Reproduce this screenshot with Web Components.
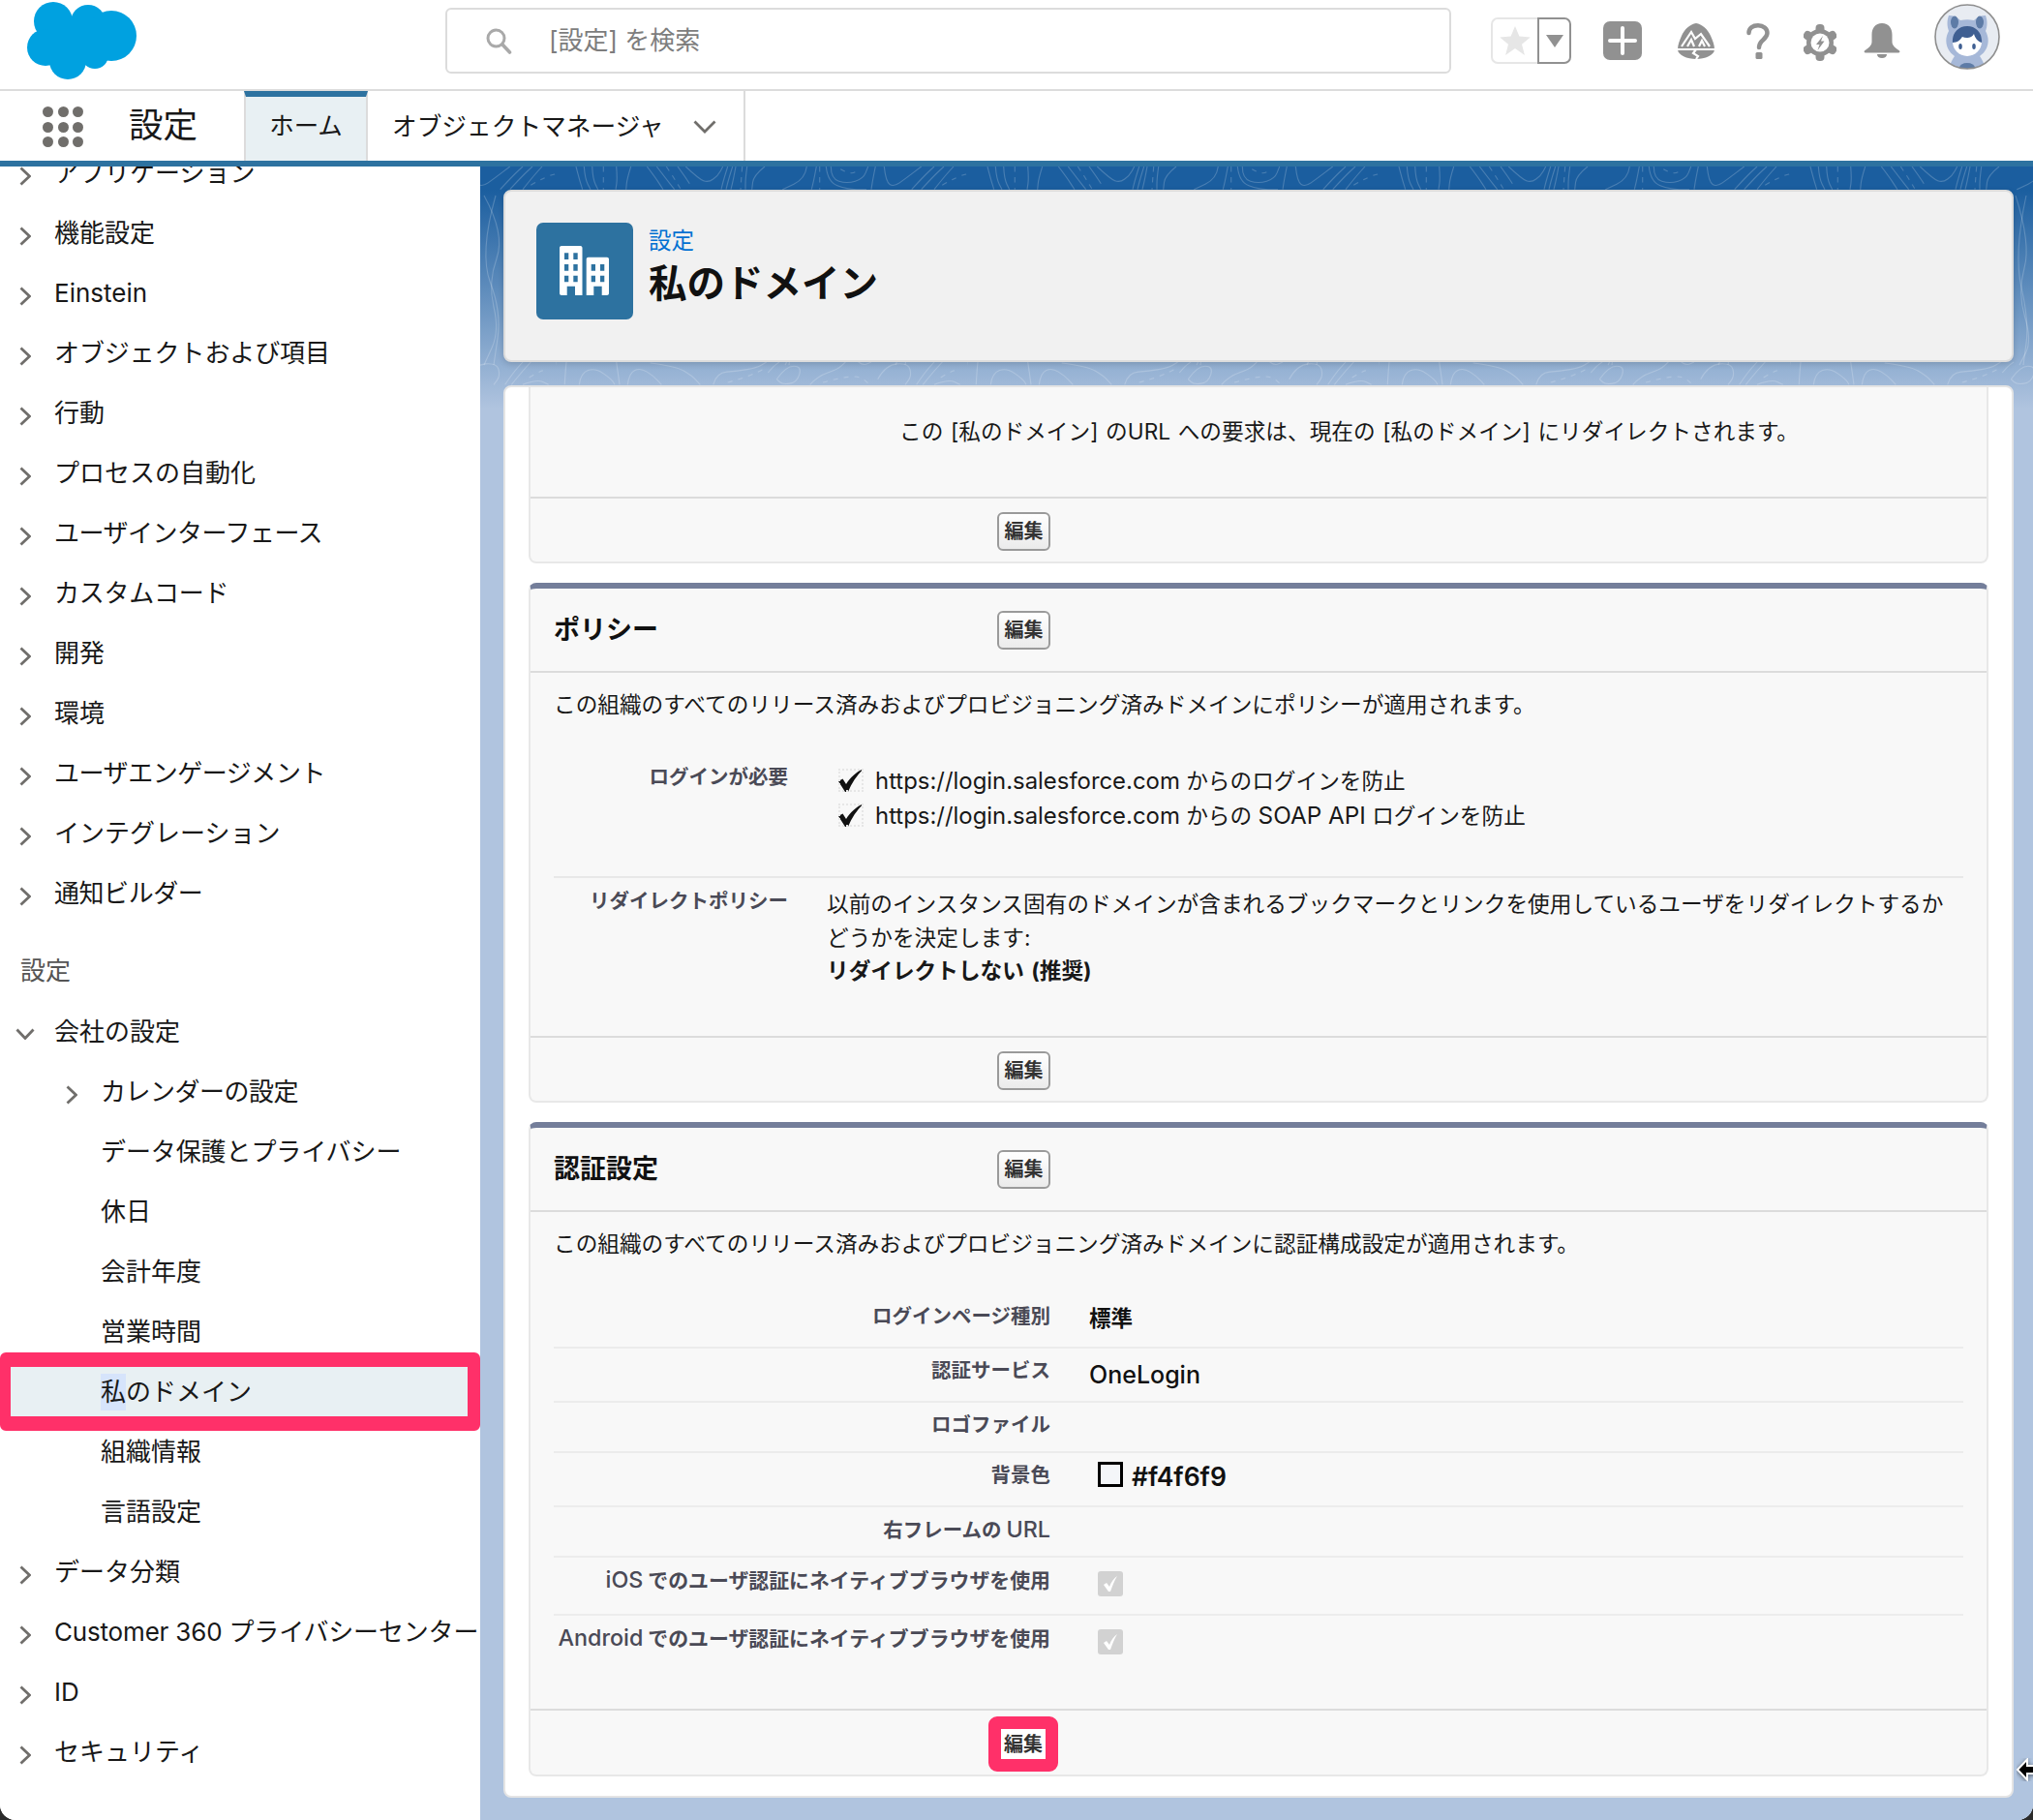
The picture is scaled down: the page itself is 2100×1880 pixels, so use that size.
<!DOCTYPE html>
<html lang="ja">
<head>
<meta charset="utf-8">
<title>私のドメイン</title>
<style>
html,body{margin:0;padding:0;width:2100px;height:1880px;background:#2b2b2b;overflow:hidden}
body{font-family:Inter,"Noto Sans CJK JP",sans-serif;color:#181818}
sf-side-item mark{display:inline-block;background:#d6e4fb;color:inherit;line-height:38px;width:26px}
</style>
</head>
<body>
<sf-app>
  <sf-header slot="header"></sf-header>
  <sf-nav slot="nav"></sf-nav>
  <sf-sidebar slot="side">
    <sf-side-item chev>アプリケーション</sf-side-item>
    <sf-side-item chev>機能設定</sf-side-item>
    <sf-side-item chev>Einstein</sf-side-item>
    <sf-side-item chev style="letter-spacing:-.1px">オブジェクトおよび項目</sf-side-item>
    <sf-side-item chev>行動</sf-side-item>
    <sf-side-item chev>プロセスの自動化</sf-side-item>
    <sf-side-item chev style="letter-spacing:-.5px">ユーザインターフェース</sf-side-item>
    <sf-side-item chev style="letter-spacing:-.25px">カスタムコード</sf-side-item>
    <sf-side-item chev>開発</sf-side-item>
    <sf-side-item chev>環境</sf-side-item>
    <sf-side-item chev style="letter-spacing:-.45px">ユーザエンゲージメント</sf-side-item>
    <sf-side-item chev>インテグレーション</sf-side-item>
    <sf-side-item chev style="letter-spacing:-.45px">通知ビルダー</sf-side-item>
    <sf-side-heading>設定</sf-side-heading>
    <sf-side-item chev="open">会社の設定</sf-side-item>
    <sf-side-item chev nested style="letter-spacing:-.5px">カレンダーの設定</sf-side-item>
    <sf-side-item nested style="letter-spacing:-.1px">データ保護とプライバシー</sf-side-item>
    <sf-side-item nested>休日</sf-side-item>
    <sf-side-item nested>会計年度</sf-side-item>
    <sf-side-item nested>営業時間</sf-side-item>
    <sf-side-item nested highlight><mark>私</mark>のドメイン</sf-side-item>
    <sf-side-item nested>組織情報</sf-side-item>
    <sf-side-item nested>言語設定</sf-side-item>
    <sf-side-item chev>データ分類</sf-side-item>
    <sf-side-item chev style="letter-spacing:-.18px">Customer 360 プライバシーセンター</sf-side-item>
    <sf-side-item chev>ID</sf-side-item>
    <sf-side-item chev>セキュリティ</sf-side-item>
  </sf-sidebar>
  <sf-main slot="main">
    <sf-page-head></sf-page-head>
    <sf-card>
      <sf-panel first>
        <sf-top-note>この [私のドメイン] のURL への要求は、現在の [私のドメイン] にリダイレクトされます。</sf-top-note>
      </sf-panel>
      <sf-panel heading="ポリシー">
        <sf-desc>この組織のすべてのリリース済みおよびプロビジョニング済みドメインにポリシーが適用されます。</sf-desc>
        <sf-policy></sf-policy>
      </sf-panel>
      <sf-panel heading="認証設定" highlight>
        <sf-desc>この組織のすべてのリリース済みおよびプロビジョニング済みドメインに認証構成設定が適用されます。</sf-desc>
        <sf-auth></sf-auth>
      </sf-panel>
    </sf-card>
  </sf-main>
  <sf-cursor slot="over"></sf-cursor>
</sf-app>

<script>
function def(name, html){
  class C extends HTMLElement{
    constructor(){super();this.attachShadow({mode:'open'}).innerHTML=typeof html==='function'?html(this):html;}
  }
  customElements.define(name,C);
}
const CHEV='<svg width="12" height="20" viewBox="0 0 12 20"><path d="M1.5 1.5 10.5 10 1.5 18.5" fill="none" stroke="#706e6b" stroke-width="2.8"/></svg>';

/* contour background: points are read from the reference and smoothed */
function contour(){
  const smooth=(pts)=>{
    let d='M'+pts[0].join(' ');
    for(let i=1;i<pts.length-1;i++){
      const mx=(pts[i][0]+pts[i+1][0])/2,my=(pts[i][1]+pts[i+1][1])/2;
      d+=` Q${pts[i][0]} ${pts[i][1]} ${mx} ${my}`;
    }
    d+=' L'+pts[pts.length-1].join(' ');
    return d;
  };
  const band=(top,y0)=>(s)=>s.trim().split(/\s+/).map(p=>{const[a,b]=p.split(',').map(Number);return [+(a/3).toFixed(1),+((b-y0)/3+top).toFixed(1)]});
  const A=band(0,22),B=band(202,27);
  const a=['60,22 70,60 80,93','85,22 88,60 105,93','110,22 112,60 128,93','185,22 188,60 183,93','230,22 218,60 215,93',
    '280,22 305,55 330,93','310,22 335,55 365,93','375,22 395,50 412,75','400,22 440,60 470,72 500,50 515,22',
    '530,22 518,60 510,93','545,22 533,60 525,93','555,22 548,60 540,93','590,22 585,60 585,93','645,22 610,50 605,93',
    '775,22 770,60 700,93','805,22 798,60 790,93','850,22 850,60 900,75 950,60 965,22','835,22 840,70 900,93 960,93','988,22 980,60 975,93',
    '1015,22 1020,70 1045,85 1080,60 1130,22','1100,93 1135,55 1170,22','1130,93 1165,55 1200,22','1170,93 1200,55 1230,22'];
  const ad=['145,22 145,60 145,93','340,22 362,55 385,93','575,22 572,60 570,93','815,22 815,60 815,93','880,30 910,48 940,30','1195,80 1280,30 1310,70'];
  const b=['30,27 27,60 25,97','70,97 75,60 120,45 170,80 180,97','185,27 190,60 195,97','220,97 225,60 260,45 300,70 325,97','290,30 370,40 420,70 445,97',
    '485,97 495,60 560,55 620,45 650,27','682,80 710,40 760,40 745,90 700,97 682,80','655,60 672,40 690,27','785,97 810,70 870,50 895,27','935,27 950,38 975,27',
    '995,80 1020,35 1090,30 1100,70 1080,97','1115,97 1140,60 1170,27','1135,97 1165,60 1195,27','1170,97 1215,80 1250,97','1275,27 1280,60 1285,97'];
  const bd=['530,90 585,75 640,50','825,90 880,75 940,70 970,97','1190,75 1215,60 1240,50'];
  const side=[[[350,30],[372,70],[354,120],[366,170],[350,205]],[[362,30],[345,90],[368,150],[360,205]],
    [[232,30],[248,80],[234,130],[249,180],[236,205]],[[243,30],[230,90],[246,160],[240,205]]];
  const path=(d,dash)=>`<path d="${d}"${dash?' stroke-dasharray="5 6"':''}/>`;
  const body=[...a.map(s=>path(smooth(A(s)))),...ad.map(s=>path(smooth(A(s)),1)),
    ...b.map(s=>path(smooth(B(s)))),...bd.map(s=>path(smooth(B(s)),1)),...side.map(s=>path(smooth(s)))].join('');
  const svg=`<svg xmlns="http://www.w3.org/2000/svg" width="425" height="240" viewBox="0 0 425 240"><g fill="none" stroke="#fff" stroke-opacity=".2" stroke-width="1.1">${body}</g></svg>`;
  return 'url("data:image/svg+xml,'+encodeURIComponent(svg)+'")';
}

def('sf-app',`<style>
:host{display:grid;grid-template-columns:496px 1fr;grid-template-rows:94px 78px 1fr;width:2100px;height:1880px;position:relative;overflow:hidden;border-radius:0 0 16px 16px;background:#fff}
::slotted([slot=header]),::slotted([slot=nav]){grid-column:1/3}
</style><slot name="header"></slot><slot name="nav"></slot><slot name="side"></slot><slot name="main"></slot><slot name="over"></slot>`);

def('sf-header',`<style>
:host{display:flex;align-items:flex-start;height:94px;box-sizing:border-box;border-bottom:2px solid #dcdcdc;background:#fff}
.logo{margin:0 0 0 28px;width:116px;height:84px;flex:none}
.search{margin:8px 0 0 316px;width:1039px;height:68px;box-sizing:border-box;border:2px solid #dcdcdc;border-radius:6px;display:flex;align-items:center;padding-left:39px;flex:none}
.search span{margin-left:38px;font-size:26px;color:#7d7d7d;line-height:30px}
.fav{margin:18px 0 0 41px;display:flex;height:48px;flex:none}
.fav i{display:flex;align-items:center;justify-content:center;box-sizing:border-box;height:48px}
.fav .a{width:48px;border:2px solid #e6e6e6;border-right:0;border-radius:7px 0 0 7px}
.fav .b{width:35px;border:2px solid #919191;border-radius:0 7px 7px 0}
.ic{flex:none;display:block}
</style>
<svg class="logo" viewBox="0 0 116 84"><g fill="#00a1e0"><circle cx="27" cy="22" r="20"/><circle cx="63" cy="23" r="18"/><circle cx="87" cy="37" r="26"/><circle cx="19" cy="49" r="19"/><circle cx="42" cy="63" r="19"/><circle cx="70" cy="57" r="14"/><rect x="22" y="22" width="60" height="40"/></g></svg>
<div class="search"><svg width="28" height="28" viewBox="0 0 28 28"><circle cx="11.500" cy="11.500" r="8.500" fill="none" stroke="#a9a9a9" stroke-width="3"/><path d="M18 18l7.500 8" stroke="#a9a9a9" stroke-width="3.600" fill="none" stroke-linecap="round"/></svg><span>[設定] を検索</span></div>
<div class="fav"><i class="a"><svg width="32" height="32" viewBox="0 0 32 32"><path d="M16 1l4.400 10.600 11.400.8-8.800 7.300 2.900 11.200L16 24l-9.900 6.900 2.900-11.200L.2 12.400l11.400-.8z" fill="#e6e6e6"/></svg></i><i class="b"><svg width="18" height="13" viewBox="0 0 18 13"><path d="M0 0h18L9 13z" fill="#919191"/></svg></i></div>
<svg class="ic" style="margin:22px 0 0 33px" width="40" height="40" viewBox="0 0 40 40"><rect width="40" height="40" rx="7" fill="#919191"/><path d="M20 7v26M7 20h26" stroke="#fff" stroke-width="4" stroke-linecap="round"/></svg>
<svg class="ic" style="margin:24px 0 0 37px" width="38" height="38" viewBox="0 0 38 38"><path d="M19 0C25 1 31 6 34 13 36 18 38 22 38 27 38 33 28 37 19 37 10 37 0 33 0 27 0 22 2 18 4 13 7 6 13 1 19 0z" fill="#919191"/><path d="M4 24 14 9 18 16 24 11 33 24M10 24 14 17 17 24M22 24 25 18 28 24M0 27H38M19 27 16 31 21 34 19 37" fill="none" stroke="#fff" stroke-width="2.200"/></svg>
<svg class="ic" style="margin:24px 0 0 33px" width="24" height="37" viewBox="0 0 24 37"><path d="M2.500 10C2.500 5 6.500 2.300 12 2.300S21.500 5.500 21.500 10c0 7-8.500 7-8.500 15" fill="none" stroke="#919191" stroke-width="4.500" stroke-linecap="round"/><rect x="9.500" y="30" width="7" height="7" rx="1.500" fill="#919191"/></svg>
<svg class="ic" style="margin:25px 0 0 35px" width="34" height="38" viewBox="0 0 34 38"><g fill="#919191"><circle cx="17" cy="19" r="14"/><rect x="12.500" y="0" width="9" height="38" rx="4"/><rect x="12.500" y="0" width="9" height="38" rx="4" transform="rotate(60 17 19)"/><rect x="12.500" y="0" width="9" height="38" rx="4" transform="rotate(120 17 19)"/></g><circle cx="17" cy="19" r="9.500" fill="#fff"/><path d="M20 12 13 21h3.500l-2 6 7-9.500H18z" fill="#919191"/></svg>
<svg class="ic" style="margin:24px 0 0 28px" width="38" height="36" viewBox="0 0 38 36"><path d="M19 0c7 0 10.500 5 10.500 12v7c0 4 3 6 7 9 1.500 1 1 2.500-.5 2.500H2c-1.500 0-2-1.500-.5-2.500 4-3 7-5 7-9v-7C8.500 5 12 0 19 0z" fill="#919191"/><path d="M14 32h10c0 2.500-2 4-5 4s-5-1.500-5-4z" fill="#919191"/></svg>
<svg class="ic" style="margin:4px 0 0 35px" width="68" height="68" viewBox="0 0 68 68"><defs><clipPath id="av"><circle cx="34" cy="34" r="33"/></clipPath></defs><circle cx="34" cy="34" r="33" fill="#e8ecf2"/><g clip-path="url(#av)"><path d="M15 12c5 0 9 2 12 5 5-1 9-1 14 0 3-3 7-5 12-5 2 5 2 11 0 16 5 9 3 20-6 26 3 4 5 9 6 14H15c1-5 3-10 6-14-9-6-11-17-6-26-2-5-2-11 0-16z" fill="#a6b8d8"/><ellipse cx="21" cy="19" rx="4" ry="6.500" fill="#5d7ba6"/><ellipse cx="47" cy="19" rx="4" ry="6.500" fill="#5d7ba6"/><circle cx="34" cy="39" r="15" fill="#fff"/><path d="M19 40c-1-10 6-17 15-17s16 7 15 17c-4-1-7-5-8-9-2 4-8 5-12 3-2 3-5 6-10 6z" fill="#3f5f92"/><ellipse cx="27" cy="44" rx="1.800" ry="3" fill="#3f5f92"/><ellipse cx="41" cy="44" rx="1.800" ry="3" fill="#3f5f92"/><ellipse cx="34" cy="66" rx="8" ry="5" fill="#5d7ba6"/></g><circle cx="34" cy="34" r="33" fill="none" stroke="#8f8f8f" stroke-width="1.600"/></svg>`);

def('sf-nav',`<style>
:host{display:flex;height:78px;box-sizing:border-box;border-bottom:6px solid #2d72a0;background:#fff}
.w{margin:16px 0 0 44px;width:42px;height:42px;display:grid;grid-template-columns:repeat(3,11px);grid-auto-rows:11px;gap:4.500px 4.500px;flex:none}
.w i{background:#706e6b;border-radius:50%}
.t{margin:13px 0 0 47px;font-size:35.500px;line-height:46px;width:119px;flex:none}
.h{width:128px;box-sizing:border-box;border:solid #dcdcdc;border-width:0 2px;border-top:6px solid #2d72a0;background:#e8f0f3;font-size:25.500px;line-height:60px;text-align:center;flex:none}
.o{width:390px;box-sizing:border-box;border-right:2px solid #dcdcdc;display:flex;align-items:center;padding-left:25px;font-size:25.700px;flex:none}
.o span{margin-top:-4px}
.o svg{margin-left:30px;margin-top:2px}
</style>
<div class="w"><i></i><i></i><i></i><i></i><i></i><i></i><i></i><i></i><i></i></div>
<div class="t">設定</div><div class="h">ホーム</div>
<div class="o"><span>オブジェクトマネージャ</span><svg width="24" height="14" viewBox="0 0 24 14"><path d="M1.500 1.500 12 12 22.500 1.500" fill="none" stroke="#706e6b" stroke-width="2.800"/></svg></div>`);

def('sf-sidebar',`<style>
:host{display:block;overflow:hidden;background:#fff;height:1708px}
.in{margin-top:-25px}
</style><div class="in"><slot></slot></div>`);

def('sf-side-item',(el)=>{
  const c=el.getAttribute('chev'),nested=el.hasAttribute('nested'),hl=el.hasAttribute('highlight');
  const ic=c===null?'':(c==='open'
    ?'<svg class="ch" style="left:16px;top:28px" width="20" height="12" viewBox="0 0 20 12"><path d="M1.500 1.500 10 10.500 18.500 1.500" fill="none" stroke="#706e6b" stroke-width="2.800"/></svg>'
    :CHEV.replace('<svg','<svg class="ch" style="left:'+(nested?68:20)+'px;top:25px"'));
  return `<style>
  :host{display:block;height:62px;line-height:64px;font-size:26px;position:relative;white-space:nowrap;padding-left:${nested?104:56}px;color:#181818}
  .ch{position:absolute}
  ${hl?`:host{background:#e8f0f3}
  :host::after{content:"";position:absolute;left:0;right:0;top:-9px;bottom:-10px;border:solid #ff3069;border-width:15px 13px 15px 11px;border-radius:6px;box-sizing:border-box;pointer-events:none}`:''}
  </style>${ic}<slot></slot>`;
});

def('sf-side-heading',`<style>:host{display:block;height:81px;padding:19px 0 0 21px;box-sizing:border-box;font-size:26px;line-height:62px;color:#555}</style><slot></slot>`);

def('sf-main',`<style>
:host{display:block;padding:24px 20px 0 24px;height:1708px;box-sizing:border-box;background-color:#b0c4df;
background-image:${contour()},linear-gradient(#1b5e9f 0,#1b5e9f 24px,#b0c4df 250px);
background-repeat:repeat-x,no-repeat;background-position:79px 0,0 0}
</style><slot></slot>`);

def('sf-page-head',`<style>
:host{display:flex;height:178px;box-sizing:border-box;background:#f1f1f1;border:2px solid #dcdcdc;border-radius:8px;padding:32px 0 0 32px;align-items:flex-start;box-shadow:0 2px 6px rgba(0,0,0,.15)}
.i{width:100px;height:100px;border-radius:7px;background:#2d72a0;display:flex;align-items:center;justify-content:center;flex:none}
.tx{margin-left:16px}
.c{font-size:23.500px;line-height:30px;color:#0070d2;margin-top:4px}
.h{font-size:39.500px;line-height:56px;font-weight:700;color:#111;margin-top:1px}
</style>
<div class="i"><svg width="52" height="52" viewBox="0 0 52 52"><path fill="#fff" fill-rule="evenodd" d="M2 0h19.500c1.100 0 2 .9 2 2v49h-7.500v-9.300H7.700V51H2c-1.100 0-2-.9-2-2V2C0 .9.900 0 2 0zM5 7.300V14h4.300V7.300zM14.300 7.300V14h4.400V7.300zM5 19v6.700h4.300V19zM14.300 19v6.700h4.400V19zM5 30.700v6.600h4.300v-6.600zM14.300 30.700v6.600h4.400v-6.600zM29.700 11.700H49c1.100 0 2 .9 2 2V49c0 1.100-.9 2-2 2h-5.300v-9.300h-8.400V51h-7.600V13.700c0-1.100.9-2 2-2zM32.700 19v6.700H37V19zM42 19v6.700h4.300V19zM32.700 30.700v6.600H37v-6.600zM42 30.700v6.600h4.300v-6.600z"/></svg></div>
<div class="tx"><div class="c">設定</div><div class="h">私のドメイン</div></div>`);

def('sf-card',`<style>
:host{display:flex;flex-direction:column;gap:20px;margin-top:24px;box-sizing:border-box;background:#fff;border:2px solid #e4e4e4;border-radius:8px;padding:0 24px 20px 24px}
</style><slot></slot>`);

def('sf-btn',(el)=>{
  const hl=el.hasAttribute('highlight');
  return `<style>:host{display:inline-flex;align-items:center;justify-content:center;box-sizing:border-box;flex:none;
  font-size:20px;font-weight:700;color:#333;line-height:26px;
  ${hl?'width:72px;height:57px;margin-left:-9px;border:13px solid #ff3069;border-radius:9px;background:#fff;':'width:55px;height:40px;border:2px solid #9a9a9a;border-radius:6px;background:linear-gradient(#fff,#ebebeb);'}}</style><slot></slot>`;
});

def('sf-panel',(el)=>{
  const first=el.hasAttribute('first'),h=el.getAttribute('heading'),hl=el.hasAttribute('highlight');
  return `<style>
  :host{display:flex;flex-direction:column;background:#f8f8f8;border:2px solid #e8e8e8;${first?'border-top:0;':'border-top:6px solid #747e9a;'}border-radius:${first?'0 0 8px 8px':'8px'};flex:none}
  .h{height:87px;box-sizing:border-box;border-bottom:2px solid #dcdcdc;display:flex;align-items:center;padding:1px 0 0 24px}
  .h b{font-size:27px;line-height:34px;color:#111;width:458px;flex:none}
  .b{flex:1}
  .f{height:${hl?68:67}px;box-sizing:border-box;border-top:2px solid #dcdcdc;display:flex;align-items:center;padding:3px 0 0 482px;background:#f8f8f8;border-radius:0 0 8px 8px}
  </style>
  ${h?`<div class="h"><b>${h}</b><sf-btn>編集</sf-btn></div>`:''}
  <div class="b"><slot></slot></div>
  <div class="f"><sf-btn ${hl?'highlight':''}>編集</sf-btn></div>`;
});

def('sf-top-note',`<style>:host{display:block;height:113px;box-sizing:border-box;padding:29px 0 0 381px;font-size:22.670px;line-height:34px;color:#181818;white-space:nowrap;word-spacing:1.300px}</style><slot></slot>`);
def('sf-desc',`<style>:host{display:block;padding:16px 0 0 24px;font-size:22.670px;line-height:34px;color:#181818;white-space:nowrap}</style><slot></slot>`);

const CHECK='<svg width="26" height="24" viewBox="0 0 26 24" style="display:block"><path d="M0 13l4.500-2.500 3.500 5.500C12 9.500 18 3.500 26 0 19 7 13.500 15 10 24H7z" fill="#111"/></svg>';
const U='<span class="u">https://login.salesforce.com</span>';
def('sf-policy',`<style>
:host{display:block;margin:42px 24px 0 24px;font-size:22.670px;color:#181818}
.r{display:grid;grid-template-columns:242px 1fr}
.l{text-align:right;font-size:20.500px;font-weight:700;color:#4a4a56;line-height:28px;padding-top:2px}
.r1{height:120px;box-sizing:border-box;border-bottom:2px solid #e8e8e8}
.c{display:flex;align-items:center;height:36px;padding-left:52px;white-space:nowrap}
.c i{width:26px;height:24px;margin-right:12px;flex:none;margin-top:2px;outline:2px dotted #e6e6e6;outline-offset:-2px}
.u{font-size:23.900px}
.s{font-size:24.300px}
.r2{padding-top:10px}
.v{padding-left:40px;line-height:34.500px;padding-bottom:49px}
.v b{font-weight:700;word-spacing:2px}
</style>
<div class="r r1"><div class="l">ログインが必要</div><div><div class="c"><i>${CHECK}</i><span>${U} からのログインを防止</span></div><div class="c"><i>${CHECK}</i><span>${U} からの <span class="s">SOAP API</span> ログインを防止</span></div></div></div>
<div class="r r2"><div class="l" style="padding-top:0">リダイレクトポリシー</div><div class="v">以前のインスタンス固有のドメインが含まれるブックマークとリンクを使用しているユーザをリダイレクトするかどうかを決定します:<br><b>リダイレクトしない (推奨)</b></div></div>`);

const TICK='<svg width="26" height="26" viewBox="0 0 26 26" style="display:block"><rect width="26" height="26" rx="3" fill="#d2d2d2"/><path d="M6 14l3-2 3 4c2-5 4-8 8-11-3 5-5 10-7 16h-2z" fill="#fff"/></svg>';
const SW='<span style="display:inline-block;box-sizing:border-box;width:26px;height:26px;border:3px solid #000;background:#f4f6f9;margin:0 9px 0 9px;vertical-align:-1px"></span>';
def('sf-auth',`<style>
:host{display:block;margin:33px 24px 36.500px 24px}
.r{display:grid;grid-template-columns:513px 1fr;column-gap:40px;box-sizing:border-box;border-bottom:2px solid #ececec}
.r:last-child{border-bottom:0}
.l{text-align:right;font-size:20.500px;font-weight:700;color:#4a4a56;line-height:28px;padding-top:9px;white-space:nowrap}
.l.w{font-size:20.900px}
.l span{font-size:23.300px;font-weight:500}
.v{padding-top:13px;font-size:25px;font-weight:500;line-height:28px;color:#111;white-space:nowrap}
.k{padding:14px 0 0 9px}
.sb{font-weight:600;font-size:26.500px;padding-top:9px}
</style>
<div class="r" style="height:58px"><div class="l" style="padding-top:11px">ログインページ種別</div><div class="v" style="font-size:22.500px;font-weight:700">標準</div></div>
<div class="r" style="height:56px"><div class="l">認証サービス</div><div class="v">OneLogin</div></div>
<div class="r" style="height:52px"><div class="l">ロゴファイル</div><div class="v"></div></div>
<div class="r" style="height:56px"><div class="l">背景色</div><div class="v sb">${SW}#f4f6f9</div></div>
<div class="r" style="height:52px"><div class="l">右フレームの <span>URL</span></div><div class="v"></div></div>
<div class="r" style="height:60px"><div class="l w"><span>iOS</span> でのユーザ認証にネイティブブラウザを使用</div><div class="k">${TICK}</div></div>
<div class="r" style="height:60px"><div class="l w"><span>Android</span> でのユーザ認証にネイティブブラウザを使用</div><div class="k">${TICK}</div></div>`);

def('sf-cursor',`<style>:host{position:absolute;left:2083px;top:1816px;width:24px;height:24px;display:block}</style><svg width="28" height="24" viewBox="0 0 28 24"><path d="M1 12 11 1.500V8H24v8H11v6.500z" fill="#000" stroke="#fff" stroke-width="2" filter="drop-shadow(0 1px 2px rgba(0,0,0,.5))"/></svg>`);
</script>
</body>
</html>
